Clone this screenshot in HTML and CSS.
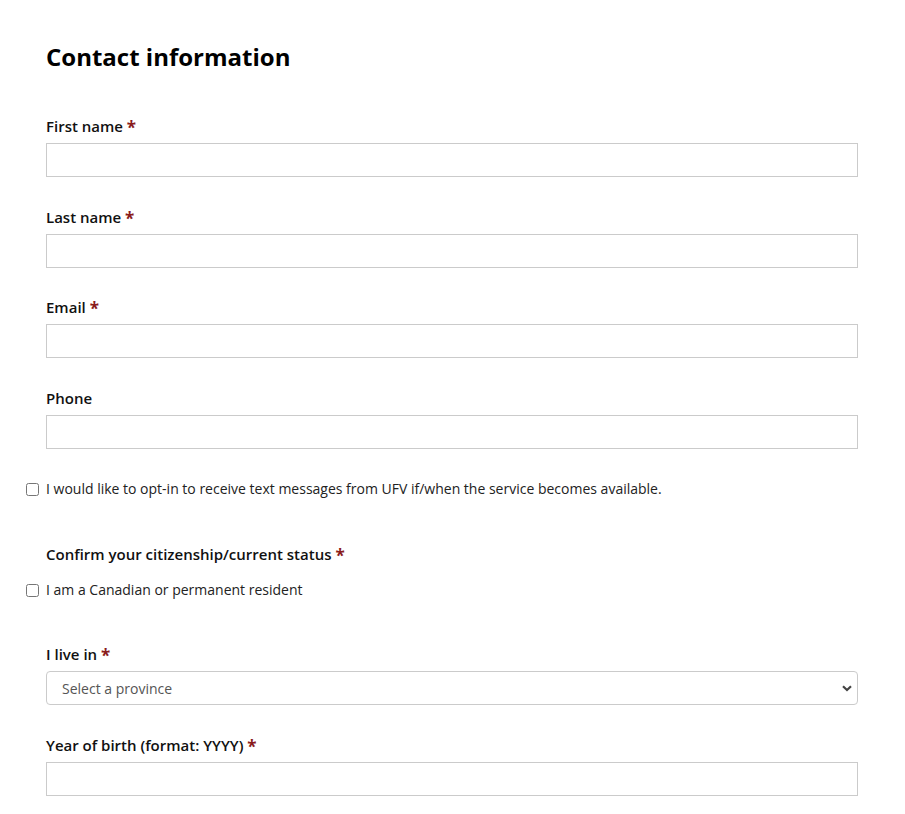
FILE: index.html
```html
<!DOCTYPE html>
<html lang="en">
<head>
<meta charset="utf-8">
<title>Contact information</title>
<link rel="stylesheet" href="styles.css">
</head>
<body>
<main class="form">
  <h2 class="title">Contact information</h2>

  <div class="field field-first">
    <label class="label" for="fn">First name <span class="req">*</span></label>
    <input class="input" id="fn" type="text">
  </div>

  <div class="field">
    <label class="label" for="ln">Last name <span class="req">*</span></label>
    <input class="input" id="ln" type="text">
  </div>

  <div class="field">
    <label class="label" for="em">Email <span class="req">*</span></label>
    <input class="input" id="em" type="text">
  </div>

  <div class="field">
    <label class="label" for="ph">Phone</label>
    <input class="input" id="ph" type="text">
  </div>

  <label class="check check-optin"><input type="checkbox" class="box"><span>I would like to opt-in to receive text messages from UFV if/when the service becomes available.</span></label>

  <div class="label label-status">Confirm your citizenship/current status <span class="req">*</span></div>
  <label class="check check-status"><input type="checkbox" class="box"><span>I am a Canadian or permanent resident</span></label>

  <div class="field field-live">
    <label class="label" for="prov">I live in <span class="req">*</span></label>
    <div class="select-wrap">
      <select class="select" id="prov"><option>Select a province</option></select>
      <svg class="chev" width="10" height="7" viewBox="0 0 10 7"><path d="M1 1.2 L5 5 L9 1.2" fill="none" stroke="#444" stroke-width="2.2"/></svg>
    </div>
  </div>

  <div class="field">
    <label class="label" for="yb">Year of birth (format: YYYY) <span class="req">*</span></label>
    <input class="input" id="yb" type="text">
  </div>
</main>
</body>
</html>
```

FILE: styles.css
```css
html, body {
  margin: 0;
  padding: 0;
  background: #fff;
}
body {
  font-family: "Open Sans", "Noto Sans", sans-serif;
  color: #222;
  font-size: 14px;
}
.form {
  width: 812px;
  padding: 41px 0 0 46px;
}
.title {
  margin: 0;
  font-size: 24px;
  line-height: 31px;
  font-weight: 700;
  color: #000;
}
.field {
  margin-top: 28.5px;
}
.field-first {
  margin-top: 43px;
}
.label {
  display: block;
  font-size: 15px;
  line-height: 22px;
  font-weight: 600;
  color: #111;
  margin-bottom: 6px;
}
.req {
  color: #8a1c1c;
  font-weight: 700;
  font-size: 17px;
  line-height: 0;
  vertical-align: -2px;
}
.input {
  display: block;
  box-sizing: border-box;
  width: 812px;
  height: 34px;
  margin: 0;
  border: 1px solid #cbcbcb;
  border-radius: 0;
  background: #fff;
  outline: none;
}
.check {
  display: flex;
  align-items: center;
  margin-left: -20px;
  font-size: 14px;
  line-height: 20px;
  color: #222;
}
.box {
  width: 13px;
  height: 13px;
  margin: 0 7px 0 0;
  flex: none;
}
.check-optin {
  margin-top: 30.6px;
}
.label-status {
  margin-top: 44.4px;
  margin-bottom: 0;
}
.check-status {
  margin-top: 15px;
}
.field-live {
  margin-top: 43px;
}
.select-wrap {
  position: relative;
  width: 812px;
}
.select {
  display: block;
  box-sizing: border-box;
  width: 812px;
  height: 34px;
  margin: 0;
  padding: 0 0 0 15px;
  border: 1px solid #cbcbcb;
  border-radius: 4px;
  background: #fff;
  color: #555;
  font-family: "Open Sans", "Noto Sans", sans-serif;
  font-size: 14px;
  appearance: none;
  -webkit-appearance: none;
  outline: none;
}
.chev {
  position: absolute;
  right: 6px;
  top: 14px;
  pointer-events: none;
}
```
